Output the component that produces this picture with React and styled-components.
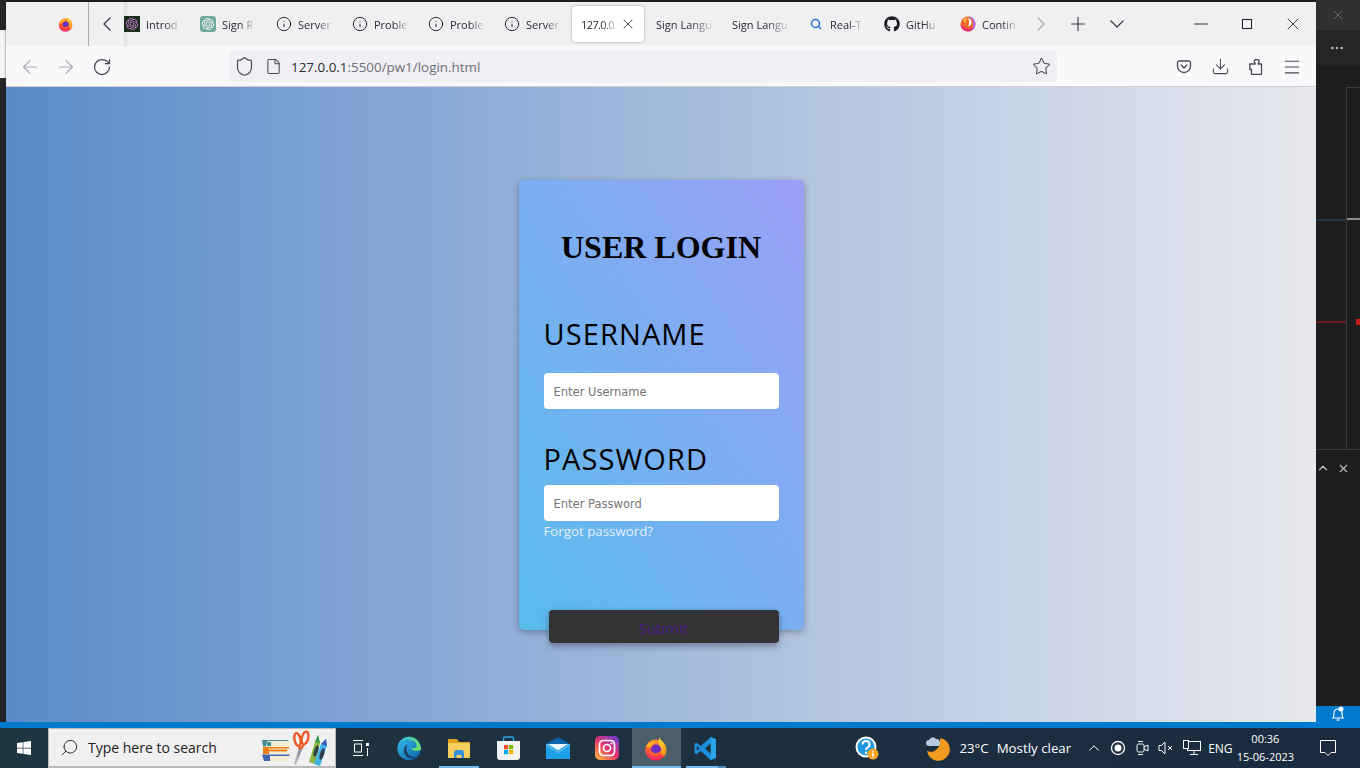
import { useId } from "react";
import styled, { createGlobalStyle } from "styled-components";
import {
  ArrowLeft,
  ArrowRight,
  ChevronDown,
  ChevronLeft,
  ChevronRight,
  ChevronUp,
  Download,
  File,
  Info,
  Menu,
  Minus,
  MoreHorizontal,
  Plus,
  RotateCw,
  Search,
  Shield,
  Star,
  X,
} from "lucide-react";
import { FaGithub, FaWindows } from "react-icons/fa";
import { SiOpenai } from "react-icons/si";

const GlobalStyle = createGlobalStyle`
  html, body { margin: 0; padding: 0; background: #1e1e1e; }
  body { font-family: "Open Sans", "Liberation Sans", sans-serif; overflow: hidden; }
  * { box-sizing: border-box; }
`;

/* ---------- page frame ---------- */
const Screen = styled.div`
  width: 1360px;
  height: 768px;
  display: flex;
  flex-direction: column;
  overflow: hidden;
`;
const Desktop = styled.div`
  flex: 0 0 722px;
  display: flex;
  background: #1e1e1e;
`;
const LeftStrip = styled.div`
  flex: 0 0 6px;
  padding-top: 30px;
  background: #262626;
`;
const LeftStripLight = styled.div`
  height: 48px;
  background: #f4f4f6;
`;
const Window = styled.div`
  flex: 0 0 1310px;
  margin-top: 2px;
  display: flex;
  flex-direction: column;
  box-shadow: 0 1px 2px rgba(0, 0, 0, 0.6);
`;

/* ---------- firefox tab strip ---------- */
const TabBar = styled.div`
  flex: 0 0 44px;
  display: flex;
  align-items: center;
  background: #f0f0f2;
  color: #2b2a33;
`;
const FirefoxSlot = styled.div`
  flex: 0 0 83px;
  height: 100%;
  display: flex;
  align-items: center;
  justify-content: flex-end;
  padding-right: 14px;
  border-right: 1px solid #a9a9ad;
`;
const StripButton = styled.div`
  flex: 0 0 ${(p) => p.$w}px;
  height: 100%;
  display: flex;
  align-items: center;
  justify-content: center;
  color: ${(p) => p.$color || "#3b3a44"};
`;
const TabScroller = styled.div`
  flex: 0 0 904px;
  height: 100%;
  display: flex;
  align-items: center;
  overflow: hidden;
  box-shadow: inset 6px 0 4px -4px rgba(0, 0, 0, 0.08);
  & > :first-child {
    margin-left: -8px;
  }
`;
const Tab = styled.div`
  flex: 0 0 76px;
  min-width: 0;
  height: 36px;
  display: flex;
  align-items: center;
  gap: 6px;
  padding: 0 0 0 8px;
  font-size: 11px;
  color: #2b2a33;
`;
const ActiveTab = styled(Tab)`
  flex-basis: 72px;
  margin-right: 4px;
  padding-left: 9px;
  gap: 2px;
  background: #fff;
  border-radius: 4px;
  box-shadow: 0 0 3px rgba(0, 0, 0, 0.35);
  letter-spacing: -0.6px;
`;
const TabIcon = styled.div`
  flex: 0 0 16px;
  min-width: 0;
  height: 16px;
  display: flex;
  align-items: center;
  justify-content: center;
  background: ${(p) => p.$bg || "transparent"};
  border-radius: ${(p) => (p.$round ? 3 : 0)}px;
`;
const TabLabel = styled.span`
  flex: none;
  white-space: nowrap;
  -webkit-mask-image: linear-gradient(to right, #000 60%, rgba(0, 0, 0, 0.15));
  mask-image: linear-gradient(to right, #000 60%, rgba(0, 0, 0, 0.15));
`;
const TabClose = styled.div`
  flex: none;
  margin-left: auto;
  margin-right: 8px;
  display: flex;
`;
const WindowControls = styled.div`
  flex: 1;
  height: 100%;
  display: flex;
  justify-content: flex-end;
  color: #1c1b22;
`;
const ControlButton = styled.div`
  flex: 0 0 46px;
  display: flex;
  align-items: center;
  justify-content: center;
`;
const MaximizeBox = styled.div`
  width: 10px;
  height: 10px;
  border: 1px solid #1c1b22;
`;

/* ---------- firefox nav bar ---------- */
const NavBar = styled.div`
  flex: 0 0 41px;
  display: flex;
  align-items: center;
  padding: 1px 0 0 6px;
  background: #f9f9fb;
  border-bottom: 1px solid #cfcfd3;
`;
const NavButton = styled.div`
  flex: 0 0 36px;
  display: flex;
  justify-content: center;
  color: ${(p) => (p.$disabled ? "#a8a8ae" : "#4a4952")};
`;
const UrlBar = styled.div`
  flex: 0 0 828px;
  height: 31px;
  margin: 0 109px;
  padding: 0 6px 0 5px;
  display: flex;
  align-items: center;
  background: #f0f0f4;
  border-radius: 4px;
  color: #4a4952;
`;
const UrlText = styled.div`
  flex: 1;
  font-size: 13.4px;
  color: #6f6e76;
  white-space: nowrap;
  & b {
    font-weight: 400;
    color: #2b2a33;
  }
`;

/* ---------- login page ---------- */
const Content = styled.main`
  flex: 1;
  display: flex;
  align-items: center;
  justify-content: center;
  background: linear-gradient(to right, #5a8aca, #e8e9ee);
`;
const Card = styled.form`
  width: 285px;
  height: 450px;
  padding: 0 25px;
  display: flex;
  flex-direction: column;
  border-radius: 5px;
  background: linear-gradient(to top right, #58bdec, #9ca0f6);
  box-shadow: 0 2px 6px rgba(0, 0, 0, 0.3);
`;
const Title = styled.h1`
  flex: none;
  margin: 48px 0 0;
  font: 700 32px/38px "Liberation Serif", "Times New Roman", serif;
  color: #000;
  text-align: center;
  white-space: nowrap;
`;
const FieldLabel = styled.label`
  flex: none;
  display: block;
  margin-top: ${(p) => p.$top}px;
  font-size: 29px;
  line-height: 38px;
  letter-spacing: 1.1px;
  color: #000;
`;
const TextInput = styled.input`
  flex: none;
  display: block;
  width: 235px;
  height: 36px;
  margin-top: ${(p) => p.$top}px;
  padding: 2px 10px 0;
  border: 0;
  border-radius: 4px;
  background: #fff;
  font: 11.5px "DejaVu Sans", Verdana, sans-serif;
  &::placeholder {
    color: #757575;
    opacity: 1;
  }
`;
const Forgot = styled.a`
  flex: none;
  font-size: 13.3px;
  line-height: 20px;
  color: #e6eefc;
`;
const Submit = styled.button`
  flex: 0 0 33px;
  width: 230px;
  margin: 69px 0 0 5px;
  padding: 3px 0 0;
  border: 0;
  border-radius: 4px;
  background: #333;
  color: #4a1a88;
  font: 15px "Open Sans", sans-serif;
  box-shadow: 0 3px 7px rgba(0, 0, 0, 0.35);
`;

/* ---------- editor behind the browser ---------- */
const Editor = styled.div`
  flex: 1;
  display: flex;
  flex-direction: column;
  background: #1e1e1e;
  color: #b8b8b8;
`;
const EditorTitle = styled.div`
  flex: 0 0 30px;
  display: flex;
  align-items: center;
  padding-left: 14px;
  background: #303030;
  color: #8a8a8a;
`;
const EditorTabs = styled.div`
  flex: 0 0 35px;
  display: flex;
  align-items: center;
  padding-left: 13px;
  background: #252526;
`;
const EditorBody = styled.div`
  flex: 0 0 363px;
  position: relative;
  margin-top: 22px;
  border-bottom: 1px solid #3c3c3c;
`;
const EditorColumn = styled.div`
  position: absolute;
  left: 30px;
  right: 0;
  top: 0;
  bottom: 0;
  border-left: 1px solid #3a3a3a;
  border-top: 1px solid #3a3a3a;
`;
const Marker = styled.div`
  position: absolute;
  left: ${(p) => p.$left}px;
  top: ${(p) => p.$top}px;
  width: ${(p) => p.$w}px;
  height: ${(p) => p.$h}px;
  background: ${(p) => p.$color};
`;
const PanelHeader = styled.div`
  flex: 0 0 34px;
  display: flex;
  align-items: center;
  gap: 7px;
  padding-top: 2px;
  color: #c4c4c4;
`;
const PanelBody = styled.div`
  flex: 1;
`;
const Notify = styled.div`
  flex: 0 0 16px;
  padding-right: 1px;
  display: flex;
  align-items: flex-start;
  justify-content: center;
  background: #007acc;
  color: #fff;
`;

const StatusStrip = styled.div`
  flex: 0 0 6px;
  background: #007acc;
`;

/* ---------- windows taskbar ---------- */
const Taskbar = styled.footer`
  flex: 0 0 40px;
  display: flex;
  align-items: stretch;
  background: linear-gradient(to right, #1f3540, #1a2b3f);
  color: #fff;
`;
const StartButton = styled.div`
  flex: 0 0 48px;
  display: flex;
  align-items: center;
  justify-content: center;
`;
const SearchBox = styled.div`
  flex: 0 0 288px;
  display: flex;
  align-items: center;
  padding: 0 5px 0 11px;
  background: #f0f0f0;
  border: 1px solid #b9b9b9;
  border-bottom-width: 2px;
  color: #222;
  font-size: 14px;
`;
const SearchGlass = styled.div`
  flex: none;
  display: flex;
  transform: scaleX(-1);
`;
const SearchText = styled.span`
  margin-left: 9px;
  flex: 1;
`;
const taskLines = {
  none: "none",
  short: "linear-gradient(#76b9ed, #76b9ed) center bottom / 40px 2px no-repeat",
  split: "linear-gradient(to right, #76b9ed 32px, #4f8ab8 32px) center bottom / 40px 2px no-repeat",
  full: "linear-gradient(#76b9ed, #76b9ed) center bottom / 100% 2px no-repeat",
};
const TaskButton = styled.div`
  flex: 0 0 49.3px;
  display: flex;
  align-items: center;
  justify-content: center;
  background: ${(p) => taskLines[p.$line || "none"]};
  background-color: ${(p) => (p.$active ? "#4b5f6b" : "transparent")};
`;
const HelpSlot = styled.div`
  flex: 0 0 48px;
  margin-left: 113px;
  display: flex;
  align-items: center;
  justify-content: center;
`;
const Weather = styled.div`
  flex: 0 0 160px;
  margin-left: 31px;
  padding-left: 4px;
  display: flex;
  align-items: center;
  font-size: 13.3px;
  white-space: nowrap;
`;
const WeatherText = styled.span`
  margin-left: ${(p) => p.$gap}px;
`;
const Tray = styled.div`
  flex: 1;
  display: flex;
  align-items: center;
  font-size: 12px;
  color: #fff;
`;
const TrayIcon = styled.div`
  flex: 0 0 ${(p) => p.$w}px;
  display: flex;
  justify-content: center;
`;
const Clock = styled.div`
  flex: 0 0 62px;
  text-align: center;
  font-size: 11px;
  line-height: 18px;
  white-space: nowrap;
`;
const ActionSlot = styled.div`
  flex: 1;
  display: flex;
  justify-content: center;
`;

/* ---------- drawn logos ---------- */
const FirefoxLogo = ({ size = 16 }) => {
  const body = useId();
  const flame = useId();
  return (
    <svg width={size} height={size} viewBox="0 0 32 32">
      <defs>
        <linearGradient id={body} x1="0.5" y1="0" x2="0.4" y2="1">
          <stop offset="0" stopColor="#ff9a22" />
          <stop offset="0.55" stopColor="#ff5a36" />
          <stop offset="1" stopColor="#f5215f" />
        </linearGradient>
        <linearGradient id={flame} x1="0.4" y1="0" x2="0.6" y2="1">
          <stop offset="0" stopColor="#ffe22e" />
          <stop offset="1" stopColor="#ff8a1e" />
        </linearGradient>
      </defs>
      <circle cx="15" cy="18" r="13.500" fill={`url(#${body})`} />
      <path d="M20 1c0 4 4 5.500 6.500 9.500 3 5 3 11-.5 15.500l-7-6c2-6-1-8 0-13 .2-2 .5-4 1-6z" fill={`url(#${flame})`} />
      <circle cx="15.500" cy="17.500" r="6.500" fill="#6b2fc0" />
      <path d="M3 13c2-5 9-7 14-5-4 0-6 2-7 4.500-1 2.500-4 3-7 .5z" fill="#ffb02e" />
      <path d="M8.500 18c2 5 9 6 14-.5-1 7-8.500 10-13 6-1.500-1.500-2-3.500-1-5.500z" fill="#ff6a2b" />
    </svg>
  );
};
const RelayLogo = () => (
  <svg width="16" height="16" viewBox="0 0 32 32">
    <circle cx="16" cy="16" r="15" fill="#f0652e" />
    <path d="M16 1a15 15 0 0 1 0 30c8-3 11-8 11-15S22 4 16 1z" fill="#b26bf0" />
    <path d="M1 16a15 15 0 0 0 15 15c5 0 9-3 10-8-5 5-17 4-25-7z" fill="#f0297a" />
    <path d="M16 4c5 1 8 6 7 11-1 4-4 5-7 5 3-4 3-11 0-16z" fill="#fff" />
    <path d="M7 7c3-3 6-4 9-3-3 2-5 6-4 10-3 0-5-3-5-7z" fill="#ffb52e" />
  </svg>
);
const PocketIcon = () => (
  <svg width="16" height="16" viewBox="0 0 16 16" fill="none" stroke="#4a4952" strokeWidth="1.300">
    <path d="M2.500 2h11a1.500 1.500 0 0 1 1 1.500V7a6.500 6.500 0 0 1-13 0V3.500A1.500 1.500 0 0 1 2.500 2z" />
    <path d="M5 6l3 3 3-3" strokeLinecap="round" />
  </svg>
);
const ExtensionIcon = () => (
  <svg width="14" height="16" viewBox="0 0 14 16" fill="none" stroke="#4a4952" strokeWidth="1.300" strokeLinejoin="round">
    <path d="M2.500 15.500h10V5H9.200V4c.8-.4 1-1 1-1.800C10.200 1 9 .5 7.700 .5S5.200 1 5.200 2.200c0 .8.2 1.400 1 1.800V5H.8v5.500h1.700z" />
  </svg>
);
const BooksIcon = () => (
  <svg width="68" height="36" viewBox="0 0 68 36">
    <path d="M1 11h24l3 1v5H3z" fill="#f3ecd0" />
    <path d="M0 10h25l2 1H5l-1 5.500H1z" fill="#3f8e95" />
    <rect x="5" y="12" width="4" height="4" fill="#3f8e95" />
    <path d="M3 18h24v6H3z" fill="#f3ecd0" />
    <path d="M1 17h26v1.500H7V24H1z" fill="#ef7d1a" />
    <rect x="7" y="19.500" width="18" height="2" fill="#ef7d1a" />
    <path d="M1 25h26v6H3z" fill="#f3ecd0" />
    <path d="M0 24.500h28l-1 1.500H8v5H2z" fill="#3e66ad" />
    <path d="M37 17l2 1-5 17-2-1z" fill="#b4b8be" />
    <path d="M37 17l4 0-6 15z" fill="#8d9197" />
    <g fill="none" stroke="#ee5a24" strokeWidth="2.400">
      <ellipse cx="35.500" cy="9.500" rx="3" ry="6.500" transform="rotate(-12 35.500 9.500)" />
      <ellipse cx="43" cy="8" rx="3.200" ry="6.500" transform="rotate(14 43 8)" />
      <path d="M37 16l1 3M42 14l-3 5" />
    </g>
    <path d="M47 32l6-20 3-7 2 8-5 21z" fill="#8cb63c" />
    <path d="M53 12l3-7 2 8z" fill="#2e9a5a" />
    <path d="M52 34l7-20 5-5 1 7-7 20z" fill="#3fb4e6" />
    <path d="M59 14l5-5 1 7z" fill="#3f5fb8" />
    <ellipse cx="54" cy="21" rx="2" ry="6" transform="rotate(18 54 21)" fill="#2d3e50" />
    <ellipse cx="60" cy="24" rx="2" ry="6" transform="rotate(18 60 24)" fill="#2d3e50" />
  </svg>
);
const EdgeLogo = () => {
  const id = useId();
  const top = useId();
  return (
    <svg width="25" height="25" viewBox="0 0 32 32">
      <defs>
        <linearGradient id={id} x1="0" y1="0" x2="1" y2="1">
          <stop offset="0" stopColor="#35c1f1" />
          <stop offset="1" stopColor="#0c59a4" />
        </linearGradient>
        <linearGradient id={top} x1="0" y1="0" x2="1" y2="0.6">
          <stop offset="0" stopColor="#2fc0d8" />
          <stop offset="1" stopColor="#6fdc6a" />
        </linearGradient>
      </defs>
      <circle cx="15.500" cy="16" r="15" fill={`url(#${id})`} />
      <path d="M31 17C30 8 24 1 15.500 1 10 1 6 4 3 8c4-3 9-4 14-3 7 1 9 6 8 9-2 2-6 2-7 0 0 3 3 5 7 5 3 0 5-1 6-2z" fill={`url(#${top})`} />
      <path d="M13 11c-5 3-6 10-1 15 3 3 9 4 14 1-5 1-11-1-13-6-1-3-1-7 0-10z" fill="#17233f" opacity="0.7" />
    </svg>
  );
};
const FolderLogo = () => (
  <svg width="22" height="19" viewBox="0 0 22 19">
    <path d="M0 0h9l2 3h11v16H0z" fill="#e0a020" />
    <rect y="4" width="22" height="15" fill="#f7cf5e" />
    <path d="M6 19v-5a3 3 0 0 1 3-3h4a3 3 0 0 1 3 3v5h-2.500v-3h-5v3z" fill="#2f8fd8" />
  </svg>
);
const StoreLogo = () => (
  <svg width="23" height="24" viewBox="0 0 23 24">
    <path d="M6.500 5V2.500a1.500 1.500 0 0 1 1.500-1.500h7a1.500 1.500 0 0 1 1.500 1.500V5" fill="none" stroke="#2ba4e0" strokeWidth="1.600" />
    <path d="M0 5h23v16a3 3 0 0 1-3 3H3a3 3 0 0 1-3-3z" fill="#f4f4f4" />
    <rect x="7" y="9" width="4.200" height="4.200" fill="#f25022" />
    <rect x="12" y="9" width="4.200" height="4.200" fill="#7fba00" />
    <rect x="7" y="14" width="4.200" height="4.200" fill="#00a4ef" />
    <rect x="12" y="14" width="4.200" height="4.200" fill="#ffb900" />
  </svg>
);
const MailLogo = () => (
  <svg width="24" height="22" viewBox="0 0 24 22">
    <path d="M12 0l12 7v4H0V7z" fill="#0b62ad" />
    <rect y="7" width="24" height="15" fill="#1f9fe6" />
    <path d="M2 7h20l-10 6.500z" fill="#eaf4fb" />
    <path d="M0 7l12 8 12-8v1L12 16 0 8z" fill="#7cc8f2" />
  </svg>
);
const InstagramLogo = () => {
  const id = useId();
  return (
    <svg width="24" height="24" viewBox="0 0 24 24">
      <defs>
        <linearGradient id={id} x1="0.1" y1="1" x2="0.9" y2="0">
          <stop offset="0" stopColor="#fdb53a" />
          <stop offset="0.5" stopColor="#e8306f" />
          <stop offset="1" stopColor="#6a3fd0" />
        </linearGradient>
      </defs>
      <rect width="24" height="24" rx="5" fill={`url(#${id})`} />
      <rect x="4.500" y="4.500" width="15" height="15" rx="4" fill="none" stroke="#fff" strokeWidth="1.700" />
      <circle cx="12" cy="12" r="3.500" fill="none" stroke="#fff" strokeWidth="1.700" />
      <circle cx="16.500" cy="7.500" r="1" fill="#fff" />
    </svg>
  );
};
const VsCodeLogo = () => (
  <svg width="25" height="25" viewBox="0 0 24 24">
    <path d="M17 1l5 2.200v17.600L17 23 7.500 14.500 3.500 17.500 1.500 16.500V7.500l2-1 4 3z" fill="#1b8fdc" />
    <path d="M17 1l5 2.200v17.600L17 23z" fill="#2aa5ee" />
    <path d="M17 7l-5.500 5 5.500 5z" fill="#1e3040" />
    <path d="M3.800 9.500v5l2.500-2.500z" fill="#1e3040" />
  </svg>
);
const TaskViewIcon = () => (
  <svg width="18" height="18" viewBox="0 0 18 18" fill="none" stroke="#fff" strokeWidth="1">
    <path d="M1 1.500h10M1 16.500h10" />
    <rect x="2.500" y="5" width="7" height="8" />
    <rect x="14" y="4" width="3" height="3" fill="#fff" stroke="none" />
    <path d="M15.500 9v8" />
  </svg>
);
const HelpLogo = () => (
  <svg width="24" height="24" viewBox="0 0 24 24">
    <circle cx="11" cy="11" r="10.500" fill="#fff" />
    <circle cx="11" cy="11" r="8.500" fill="#1b9ae0" />
    <path d="M7.500 8.500a3.500 3.500 0 1 1 5 3.200c-1 .5-1.500 1-1.500 2.300" fill="none" stroke="#fff" strokeWidth="2" />
    <circle cx="11" cy="16.800" r="1.200" fill="#fff" />
    <circle cx="18" cy="18" r="5.500" fill="#f5a623" />
    <rect x="17.300" y="15" width="1.500" height="1.500" fill="#fff" />
    <rect x="17.300" y="17.200" width="1.500" height="4" fill="#fff" />
  </svg>
);
const MoonCloud = () => (
  <svg width="24" height="26" viewBox="0 0 24 26">
    <path d="M14 3a11.500 11.500 0 1 1-13 13c7 3 14-3 13-13z" fill="#f29a1f" />
    <path d="M3 11a3 3 0 0 1 0-6 4 4 0 0 1 7-1 3.500 3.500 0 0 1 4 3.500A3 3 0 0 1 12 11z" fill="#b9c9dc" />
  </svg>
);
const RecordIcon = () => (
  <svg width="16" height="16" viewBox="0 0 16 16">
    <circle cx="8" cy="8" r="6.500" fill="none" stroke="#fff" strokeWidth="1.300" />
    <circle cx="8" cy="8" r="3.500" fill="#fff" />
  </svg>
);
const CameraIcon = () => (
  <svg width="13" height="18" viewBox="0 0 13 18" fill="none" stroke="#fff" strokeWidth="1">
    <rect x="1" y="5" width="7" height="8" rx="1.500" />
    <path d="M8 8l4-2v6l-4-2" />
    <path d="M2 2.500h5M2 15.500h5" />
  </svg>
);
const MutedIcon = () => (
  <svg width="16" height="16" viewBox="0 0 16 16" fill="none" stroke="#fff" strokeWidth="1">
    <path d="M1 5.500h2.500L7 2v12l-3.500-3.500H1z" />
    <path d="M10 6l4 4M14 6l-4 4" />
  </svg>
);
const NetworkIcon = () => (
  <svg width="18" height="16" viewBox="0 0 18 16" fill="none" stroke="#fff" strokeWidth="1">
    <rect x="4.500" y="1.500" width="13" height="9" />
    <path d="M11 11v3M7 14.500h8" />
    <rect x="0.500" y="0.500" width="5" height="8" fill="#1a2b3f" />
  </svg>
);
const ActionCenter = () => (
  <svg width="18" height="18" viewBox="0 0 18 18" fill="none" stroke="#fff" strokeWidth="1">
    <path d="M1.500 1.500h15v12h-4.500L9 16.500 6 13.500H1.500z" />
  </svg>
);
const BellDot = () => (
  <svg width="14" height="16" viewBox="0 0 14 16" fill="none" stroke="#fff" strokeWidth="1.200">
    <path d="M2 12c1-1 1-2 1-5a4 4 0 0 1 8 0c0 3 0 4 1 5z" />
    <path d="M5.500 14h3" />
    <circle cx="10" cy="3" r="2.500" fill="#fff" stroke="none" />
  </svg>
);

const Thin = { strokeWidth: 1.3 };

const infoIcon = (
  <TabIcon>
    <Info size={18} color="#1c1b22" strokeWidth={1.4} />
  </TabIcon>
);
const tabs = [
  {
    label: "Introd",
    icon: (
      <TabIcon $bg="#1e2f1e">
        <SiOpenai size={12} color="#c77dd9" />
      </TabIcon>
    ),
  },
  {
    label: "Sign R",
    icon: (
      <TabIcon $bg="#74aa9c" $round>
        <SiOpenai size={12} color="#fff" />
      </TabIcon>
    ),
  },
  { label: "Server", icon: infoIcon },
  { label: "Proble", icon: infoIcon },
  { label: "Proble", icon: infoIcon },
  { label: "Server", icon: infoIcon },
];
const laterTabs = [
  { label: "Sign Langu" },
  { label: "Sign Langu" },
  {
    label: "Real-T",
    icon: (
      <TabIcon>
        <Search size={12} color="#1a73d1" strokeWidth={3} />
      </TabIcon>
    ),
  },
  {
    label: "GitHu",
    icon: (
      <TabIcon>
        <FaGithub size={16} color="#1b1f23" />
      </TabIcon>
    ),
  },
  {
    label: "Contin",
    icon: (
      <TabIcon>
        <RelayLogo />
      </TabIcon>
    ),
  },
];

export default function App() {
  return (
    <Screen>
      <GlobalStyle />
      <Desktop>
        <LeftStrip>
          <LeftStripLight />
        </LeftStrip>
        <Window>
          <TabBar>
            <FirefoxSlot>
              <FirefoxLogo />
            </FirefoxSlot>
            <StripButton $w={35}>
              <ChevronLeft size={24} {...Thin} />
            </StripButton>
            <TabScroller>
              {tabs.map((t, i) => (
                <Tab key={i}>
                  {t.icon}
                  <TabLabel>{t.label}</TabLabel>
                </Tab>
              ))}
              <ActiveTab>
                <TabLabel>127.0.0.</TabLabel>
                <TabClose>
                  <X size={16} {...Thin} />
                </TabClose>
              </ActiveTab>
              {laterTabs.map((t, i) => (
                <Tab key={i}>
                  {t.icon}
                  <TabLabel>{t.label}</TabLabel>
                </Tab>
              ))}
            </TabScroller>
            <StripButton $w={26} $color="#a8a8ae">
              <ChevronRight size={24} {...Thin} />
            </StripButton>
            <StripButton $w={48}>
              <Plus size={22} {...Thin} />
            </StripButton>
            <StripButton $w={30}>
              <ChevronDown size={24} {...Thin} />
            </StripButton>
            <WindowControls>
              <ControlButton>
                <Minus size={22} strokeWidth={1} />
              </ControlButton>
              <ControlButton>
                <MaximizeBox />
              </ControlButton>
              <ControlButton>
                <X size={20} strokeWidth={1} />
              </ControlButton>
            </WindowControls>
          </TabBar>
          <NavBar>
            <NavButton $disabled>
              <ArrowLeft size={22} {...Thin} />
            </NavButton>
            <NavButton $disabled>
              <ArrowRight size={22} {...Thin} />
            </NavButton>
            <NavButton>
              <RotateCw size={20} strokeWidth={1.5} />
            </NavButton>
            <UrlBar>
              <Shield size={21} {...Thin} />
              <NavButton>
                <File size={17} strokeWidth={1.5} />
              </NavButton>
              <UrlText>
                <b>127.0.0.1</b>:5500/pw1/login.html
              </UrlText>
              <Star size={19} {...Thin} />
            </UrlBar>
            <NavButton>
              <PocketIcon />
            </NavButton>
            <NavButton>
              <Download size={19} {...Thin} />
            </NavButton>
            <NavButton>
              <ExtensionIcon />
            </NavButton>
            <NavButton>
              <Menu size={20} {...Thin} />
            </NavButton>
          </NavBar>
          <Content>
            <Card onSubmit={(e) => e.preventDefault()}>
              <Title>USER LOGIN</Title>
              <FieldLabel $top={49}>USERNAME</FieldLabel>
              <TextInput $top={20} type="text" placeholder="Enter Username" />
              <FieldLabel $top={31}>PASSWORD</FieldLabel>
              <TextInput $top={7} type="password" placeholder="Enter Password" />
              <Forgot>Forgot password?</Forgot>
              <Submit type="submit">Submit</Submit>
            </Card>
          </Content>
        </Window>
        <Editor>
          <EditorTitle>
            <X size={16} strokeWidth={1} />
          </EditorTitle>
          <EditorTabs>
            <MoreHorizontal size={16} />
          </EditorTabs>
          <EditorBody>
            <EditorColumn />
            <Marker $left={0} $top={132} $w={30} $h={2} $color="#203448" />
            <Marker $left={31} $top={131} $w={13} $h={2} $color="#8a8a8a" />
            <Marker $left={0} $top={234} $w={30} $h={2} $color="#6a1c1c" />
            <Marker $left={40} $top={232} $w={4} $h={6} $color="#c81e1e" />
          </EditorBody>
          <PanelHeader>
            <ChevronUp size={14} />
            <X size={13} strokeWidth={2} />
          </PanelHeader>
          <PanelBody />
          <Notify>
            <BellDot />
          </Notify>
        </Editor>
      </Desktop>
      <StatusStrip />
      <Taskbar>
        <StartButton>
          <FaWindows size={16} color="#fff" />
        </StartButton>
        <SearchBox>
          <SearchGlass>
            <Search size={19} color="#222" strokeWidth={1.2} />
          </SearchGlass>
          <SearchText>Type here to search</SearchText>
          <BooksIcon />
        </SearchBox>
        <TaskButton>
          <TaskViewIcon />
        </TaskButton>
        <TaskButton>
          <EdgeLogo />
        </TaskButton>
        <TaskButton $line="short">
          <FolderLogo />
        </TaskButton>
        <TaskButton>
          <StoreLogo />
        </TaskButton>
        <TaskButton>
          <MailLogo />
        </TaskButton>
        <TaskButton>
          <InstagramLogo />
        </TaskButton>
        <TaskButton $active $line="full">
          <FirefoxLogo size={25} />
        </TaskButton>
        <TaskButton $line="split">
          <VsCodeLogo />
        </TaskButton>
        <HelpSlot>
          <HelpLogo />
        </HelpSlot>
        <Weather>
          <MoonCloud />
          <WeatherText $gap={9}>23°C</WeatherText>
          <WeatherText $gap={8}>Mostly clear</WeatherText>
        </Weather>
        <Tray>
          <TrayIcon $w={24}>
            <ChevronUp size={18} strokeWidth={1.3} />
          </TrayIcon>
          <TrayIcon $w={24}>
            <RecordIcon />
          </TrayIcon>
          <TrayIcon $w={24}>
            <CameraIcon />
          </TrayIcon>
          <TrayIcon $w={24}>
            <MutedIcon />
          </TrayIcon>
          <TrayIcon $w={28}>
            <NetworkIcon />
          </TrayIcon>
          <TrayIcon $w={28}>ENG</TrayIcon>
          <Clock>
            <div>00:36</div>
            <div>15-06-2023</div>
          </Clock>
          <ActionSlot>
            <ActionCenter />
          </ActionSlot>
        </Tray>
      </Taskbar>
    </Screen>
  );
}
